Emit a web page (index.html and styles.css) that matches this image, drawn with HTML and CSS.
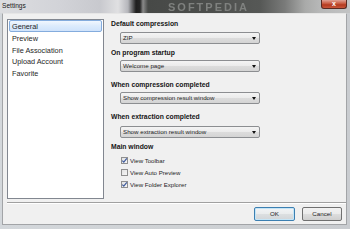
FILE: index.html
```html
<!DOCTYPE html>
<html>
<head>
<meta charset="utf-8">
<link rel="stylesheet" href="styles.css">
</head>
<body>
<div class="window">
  <div class="titlebar">
    <span class="title">Settings</span>
    <span class="watermark">SOFTPEDIA</span>
    <span class="close">x</span>
  </div>
  <div class="client">
    <div class="main">
      <div class="listbox">
        <div class="item selected">General</div>
        <div class="item">Preview</div>
        <div class="item">File Association</div>
        <div class="item">Upload Account</div>
        <div class="item">Favorite</div>
      </div>
      <div class="panel">
        <div class="label">Default compression</div>
        <div class="select s1"><span>ZIP</span><i class="arrow"></i></div>
        <div class="label l2">On program startup</div>
        <div class="select s2"><span>Welcome page</span><i class="arrow"></i></div>
        <div class="label l3">When compression completed</div>
        <div class="select s2"><span>Show compression result window</span><i class="arrow"></i></div>
        <div class="label l3">When extraction completed</div>
        <div class="select s4"><span>Show extraction result window</span><i class="arrow"></i></div>
        <div class="label l5">Main window</div>
        <div class="checks">
          <div class="check"><span class="box on"><svg viewBox="0 0 7 7" width="7" height="7"><path d="M1.3 3.6 L2.8 5.2 L5.8 1.4" fill="none" stroke="#3d5a9c" stroke-width="1.2"/></svg></span><span>View Toolbar</span></div>
          <div class="check"><span class="box"></span><span>View Auto Preview</span></div>
          <div class="check"><span class="box on"><svg viewBox="0 0 7 7" width="7" height="7"><path d="M1.3 3.6 L2.8 5.2 L5.8 1.4" fill="none" stroke="#3d5a9c" stroke-width="1.2"/></svg></span><span>View Folder Explorer</span></div>
        </div>
      </div>
    </div>
    <div class="separator"></div>
    <div class="buttons">
      <div class="btn default">OK</div>
      <div class="btn">Cancel</div>
    </div>
  </div>
</div>
</body>
</html>
```

FILE: styles.css
```css
html, body {
  margin: 0;
  padding: 0;
}
body {
  width: 350px;
  height: 229px;
  overflow: hidden;
  font-family: "Liberation Sans", Arial, sans-serif;
  color: #000;
}
.window {
  width: 350px;
  height: 229px;
  display: flex;
  flex-direction: column;
  background: linear-gradient(90deg, #d3d7db 0%, #cfd2d5 50%, #c9ccd0 100%);
}
.titlebar {
  height: 13px;
  position: relative;
  overflow: hidden;
  background: linear-gradient(90deg,
    #dcdde0 0px, #d2d3d8 60px, #c8c9ce 100px, #e0e0e2 118px, #b5b6bb 128px,
    #1f1f1f 136px, #262626 140px, #8a8a8a 143px, #474947 148px,
    #4b4d4b 200px, #565856 260px, #7a7b7a 285px, #a9aaa9 305px, #b7b8b8 320px, #c2c3c4 350px);
}
.title {
  position: absolute;
  left: 2px;
  top: 1px;
  font-size: 6.6px;
  line-height: 10px;
  color: #1b1b1b;
}
.watermark {
  position: absolute;
  left: 168px;
  top: 1px;
  font-size: 11px;
  line-height: 12px;
  font-weight: bold;
  letter-spacing: 2px;
  color: #7f817f;
  filter: blur(0.6px);
}
.close {
  position: absolute;
  left: 321px;
  top: 0;
  width: 26px;
  height: 9px;
  box-sizing: border-box;
  border: 1px solid #5a2a22;
  border-top: none;
  border-radius: 0 0 3px 3px;
  background: linear-gradient(180deg, #e0a194 0%, #c8593f 45%, #b43a1f 60%, #c8553a 100%);
  color: #fff;
  font-size: 7px;
  font-weight: bold;
  line-height: 8px;
  text-align: center;
}
.client {
  flex: 1;
  margin: 0 3px 4px 2px;
  border: 1px solid #a2a4a7;
  border-top-color: #e6e6e6;
  background: #f0f0f0;
  display: flex;
  flex-direction: column;
  padding-top: 5px;
}
.main {
  display: flex;
  height: 180px;
  margin-left: 4px;
}
.listbox {
  width: 97px;
  height: 180px;
  box-sizing: border-box;
  border: 1px solid #828790;
  background: #fff;
  padding: 0 1px;
}
.item {
  height: 11.8px;
  line-height: 11px;
  font-size: 7.3px;
  padding-left: 2px;
  box-sizing: border-box;
  border: 1px solid transparent;
  color: #1f1f1f;
  white-space: nowrap;
}
.item.selected {
  border-color: #84acdd;
  border-radius: 2px;
  background: linear-gradient(180deg, #f1f7fe 0%, #dcebfc 50%, #cfe3fb 100%);
}
.panel {
  margin-left: 7px;
  display: flex;
  flex-direction: column;
  align-items: flex-start;
}
.label {
  font-size: 6.8px;
  font-weight: bold;
  line-height: 10px;
  height: 10px;
  white-space: nowrap;
  color: #151515;
}
.l2 { margin-top: 4px; }
.l3 { margin-top: 8px; }
.l5 { margin-top: 4px; }
.select {
  margin-left: 9px;
  width: 140px;
  height: 12px;
  box-sizing: border-box;
  border: 1px solid #8c8e91;
  border-radius: 2px;
  background: linear-gradient(180deg, #f4f4f4 0%, #ebebeb 48%, #dcdcdc 52%, #d4d4d4 100%);
  display: flex;
  align-items: center;
  justify-content: space-between;
  padding: 0 3px 0 2px;
  font-size: 6.2px;
  color: #1f1f1f;
}
.s1 { margin-top: 3px; }
.s2 { margin-top: 2px; }
.s4 { margin-top: 4px; }
.select span {
  white-space: nowrap;
  line-height: 10px;
}
.arrow {
  width: 0;
  height: 0;
  border-left: 2.5px solid transparent;
  border-right: 2.5px solid transparent;
  border-top: 3px solid #111;
}
.checks {
  margin-top: 2px;
  margin-left: 10px;
  display: flex;
  flex-direction: column;
}
.check {
  height: 12.3px;
  display: flex;
  align-items: center;
  gap: 2px;
  font-size: 6.1px;
  color: #1f1f1f;
  white-space: nowrap;
}
.box {
  width: 7px;
  height: 7px;
  box-sizing: border-box;
  border: 1px solid #8f8f8f;
  background: linear-gradient(135deg, #e2e2e2 0%, #f6f6f6 100%);
  position: relative;
  display: flex;
}
.box svg {
  position: absolute;
  left: -1px;
  top: -1px;
}
.separator {
  margin: 3px 0 0 4px;
  height: 1px;
  background: #a0a0a0;
  border-bottom: 1px solid #fff;
}
.buttons {
  margin-top: 3px;
  display: flex;
  justify-content: flex-end;
  gap: 7px;
  padding-right: 4px;
}
.btn {
  width: 40px;
  height: 14px;
  box-sizing: border-box;
  border: 1px solid #707070;
  border-radius: 2px;
  background: linear-gradient(180deg, #f2f2f2 0%, #ebebeb 48%, #dddddd 52%, #cfcfcf 100%);
  font-size: 6.2px;
  line-height: 12px;
  text-align: center;
  color: #1f1f1f;
}
.btn.default {
  width: 41px;
  border-color: #3c7fb1;
  box-shadow: inset 0 0 0 1px #c4e5f7;
  background: linear-gradient(180deg, #f2f4f6 0%, #eaeced 48%, #dcdfe1 52%, #d2d5d8 100%);
}
```
